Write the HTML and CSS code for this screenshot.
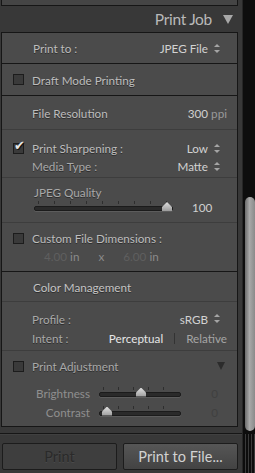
FILE: index.html
```html
<!DOCTYPE html>
<html lang="en">
<head>
  <meta charset="UTF-8">
  <title>Print Job</title>
  <link rel="stylesheet" href="styles.css">
</head>
<body>
  <div class="app">
    <div class="panel">
      <div class="prev"></div>
      <div class="header">
        <span class="title">Print Job</span>
        <span class="tri"></span>
      </div>

      <div class="box">
        <div class="sec s-printto dark">
          <span class="label">Print to :</span>
          <span class="popup">JPEG File <i class="ud"></i></span>
        </div>

        <div class="sec s-draft dark">
          <span class="check"></span>
          <span class="label">Draft Mode Printing</span>
        </div>

        <div class="sec s-res">
          <span class="label">File Resolution</span>
          <span class="value">300 <em>ppi</em></span>
        </div>

        <div class="sec s-sharp">
          <div class="line">
            <span class="check on"></span>
            <span class="label">Print Sharpening :</span>
            <span class="popup">Low <i class="ud"></i></span>
          </div>
          <div class="line">
            <span class="label dim">Media Type :</span>
            <span class="popup">Matte <i class="ud"></i></span>
          </div>
        </div>

        <div class="sec s-jpeg">
          <div class="label">JPEG Quality</div>
          <div class="slider-row">
            <div class="slider wide">
              <div class="ticks"></div>
              <div class="track"></div>
              <div class="knob" style="left: 128px"></div>
            </div>
            <span class="num">100</span>
          </div>
        </div>

        <div class="sec s-custom dark">
          <div class="line">
            <span class="check"></span>
            <span class="label">Custom File Dimensions :</span>
          </div>
          <div class="dims">
            <span class="faded">4.00</span> <span class="unit">in</span>
            <span class="x">x</span>
            <span class="faded">6.00</span> <span class="unit">in</span>
          </div>
        </div>

        <div class="sec s-cm">
          <span class="label">Color Management</span>
        </div>

        <div class="sec s-profile">
          <div class="line">
            <span class="label dim">Profile :</span>
            <span class="popup">sRGB <i class="ud"></i></span>
          </div>
          <div class="line">
            <span class="label dim">Intent :</span>
            <span class="intent">
              <span class="sel">Perceptual</span>
              <span class="bar"></span>
              <span class="opt">Relative</span>
            </span>
          </div>
        </div>

        <div class="sec s-adjust">
          <div class="line">
            <span class="check"></span>
            <span class="label dim">Print Adjustment</span>
            <span class="tri small"></span>
          </div>
          <div class="adj-row">
            <span class="adj-label">Brightness</span>
            <div class="slider">
              <div class="ticks"></div>
              <div class="track"></div>
              <div class="knob" style="left: 37px"></div>
            </div>
            <span class="num off">0</span>
          </div>
          <div class="adj-row">
            <span class="adj-label">Contrast</span>
            <div class="slider">
              <div class="ticks"></div>
              <div class="track"></div>
              <div class="knob" style="left: 3px"></div>
            </div>
            <span class="num off">0</span>
          </div>
        </div>
      </div>

      <div class="sep"></div>

      <div class="buttons">
        <button class="btn disabled">Print</button>
        <button class="btn">Print to File...</button>
      </div>
    </div>

    <div class="scroll">
      <div class="thumb"></div>
      <div class="grip"></div>
    </div>
  </div>
</body>
</html>
```

FILE: styles.css
```css
body {
  margin: 0;
  background: #0d0d0d;
  font-family: Lato, "Open Sans", sans-serif;
  font-size: 11.7px;
  color: #bdbdbd;
}
.app {
  display: flex;
  width: 255px;
  height: 473px;
  overflow: hidden;
}
.panel {
  width: 242px;
  background: #383838;
  border-right: 1px solid #262626;
}
.scroll {
  width: 12px;
  background: #0d0d0d;
  display: flex;
  flex-direction: column;
  align-items: flex-end;
}

/* previous panel bottom */
.prev {
  height: 5px;
  width: 235px;
  margin-left: 1px;
  border: 1px solid #161616;
  border-top: none;
  background: #454545;
}

.header {
  height: 26px;
  display: flex;
  justify-content: flex-end;
  align-items: center;
  padding-right: 9px;
}
.title {
  font-size: 15.5px;
  color: #b9b9b9;
  letter-spacing: -0.3px;
  margin-right: 11px;
}
.tri {
  width: 0;
  height: 0;
  border-left: 5.5px solid transparent;
  border-right: 5.5px solid transparent;
  border-top: 9px solid #a8a8a8;
}
.tri.small {
  border-left-width: 4.5px;
  border-right-width: 4.5px;
  border-top: 8px solid #2c2c2c;
  margin-left: auto;
  margin-right: 2px;
}

.box {
  width: 235px;
  margin-left: 1px;
  border: 1px solid #161616;
  background: #4b4b4b;
}
.sec {
  padding: 0 10px 0 11px;
  border-bottom: 1px solid #3d3d3d;
  box-sizing: border-box;
}
.sec.dark {
  border-bottom-color: #161616;
}
.s-adjust {
  border-bottom: none;
}
.label {
  color: #bdbdbd;
  text-shadow: 0 1px 0 #2e2e2e;
}
.label.dim {
  color: #a9a9a9;
}
.popup {
  margin-left: auto;
  color: #d2d2d2;
  display: flex;
  align-items: center;
}
.ud {
  display: inline-block;
  width: 6px;
  height: 9px;
  margin-left: 6px;
  position: relative;
}
.ud::before,
.ud::after {
  content: "";
  position: absolute;
  left: 0;
  border-left: 3px solid transparent;
  border-right: 3px solid transparent;
}
.ud::before {
  top: 0;
  border-bottom: 3.5px solid #a5a5a5;
}
.ud::after {
  bottom: 0;
  border-top: 3.5px solid #a5a5a5;
}

.s-printto {
  height: 31px;
  display: flex;
  align-items: center;
  padding-left: 31px;
  padding-right: 17px;
}
.s-draft {
  height: 32px;
  display: flex;
  align-items: center;
}
.check {
  width: 9px;
  height: 9px;
  border: 1px solid #1c1c1c;
  background: #3a3a3a;
  margin-right: 8px;
  position: relative;
  flex: none;
}
.check.on::after {
  content: "\2714";
  position: absolute;
  left: 0;
  top: -6px;
  font-family: "DejaVu Sans", sans-serif;
  font-size: 13px;
  color: #e6e6e6;
  text-shadow: 1px 1px 0 #111;
}

.s-res {
  height: 34px;
  display: flex;
  align-items: center;
  padding-left: 30px;
}
.value {
  margin-left: auto;
  color: #d0d0d0;
}
.value em {
  font-style: normal;
  color: #9a9a9a;
}

.s-sharp {
  height: 48px;
  padding-top: 9px;
  padding-right: 17px;
}
.line {
  display: flex;
  align-items: center;
  height: 18px;
}
.s-sharp .line:nth-child(2) .label,
.s-profile .line .label {
  margin-left: 19px;
}

.s-jpeg {
  height: 45px;
  padding-left: 32px;
  padding-top: 8px;
}
.s-jpeg .label {
  display: block;
  color: #a9a9a9;
  line-height: 13px;
}
.slider-row {
  display: flex;
  align-items: center;
  margin-top: 1px;
}
.slider {
  position: relative;
  width: 82px;
  height: 14px;
  flex: none;
}
.slider.wide {
  width: 139px;
}
.ticks {
  position: absolute;
  left: 4px;
  right: 4px;
  top: 1px;
  height: 3px;
  background: repeating-linear-gradient(to right, #2e2e2e 0 1px, transparent 1px 15px);
}
.slider.wide .ticks {
  background: repeating-linear-gradient(to right, #2e2e2e 0 1px, transparent 1px 16px);
}
.track {
  position: absolute;
  left: 0;
  right: 0;
  top: 6px;
  height: 3px;
  border-radius: 2px;
  background: #2a2a2a;
  border: 1px solid #1b1b1b;
  box-shadow: 0 1px 0 #5c5c5c;
}
.knob {
  position: absolute;
  top: 2px;
  width: 10px;
  height: 9px;
  background: linear-gradient(#e0e0e0, #9b9b9b);
  clip-path: polygon(50% 0, 100% 55%, 100% 100%, 0 100%, 0 55%);
}
.num {
  margin-left: 19px;
  color: #d0d0d0;
}
.num.off {
  margin-left: auto;
  margin-right: 9px;
  color: #404040;
}

.s-custom {
  height: 49px;
  padding-top: 6px;
}
.dims {
  display: flex;
  align-items: center;
  height: 18px;
  padding-left: 31px;
  color: #8a8a8a;
  white-space: pre;
}
.faded {
  color: #5f5f5f;
}
.unit {
  margin-left: 3px;
}
.x {
  margin: 0 19px 0 19px;
}

.s-cm {
  height: 30px;
  display: flex;
  align-items: center;
  padding-left: 31px;
}
.s-cm .label {
  color: #c4c4c4;
}

.s-profile {
  height: 49px;
  padding-top: 7px;
  padding-right: 17px;
}
.s-profile .line {
  height: 19px;
}
.intent {
  display: flex;
  align-items: center;
  margin-left: auto;
  margin-right: -7px;
}
.sel {
  color: #e6e6e6;
}
.bar {
  width: 1px;
  height: 11px;
  background: #333;
  margin: 2px 11px 0 11px;
}
.opt {
  color: #a5a5a5;
}

.s-adjust {
  height: 75px;
  padding-top: 6px;
}
.adj-row {
  display: flex;
  align-items: center;
  height: 19px;
}
.adj-row:nth-child(2) {
  margin-top: 8px;
}
.adj-label {
  width: 77px;
  text-align: right;
  margin-right: 9px;
  color: #8f8f8f;
}

.sep {
  margin-top: 6px;
  height: 1px;
  background: #161616;
  border-bottom: 1px solid #404040;
}
.buttons {
  display: flex;
  gap: 6px;
  padding: 8px 0 0 2px;
}
.btn {
  height: 27px;
  width: 115px;
  border: 1px solid #1c1c1c;
  border-radius: 2px;
  font-family: Lato, "Open Sans", sans-serif;
  font-size: 14.5px;
  color: #d2d2d2;
  background: linear-gradient(#565656, #434343);
  padding: 0;
}
.btn.disabled {
  color: #2a2a2a;
  background: #3e3e3e;
  text-shadow: 0 1px 0 #4a4a4a;
}

.thumb {
  margin-top: 197px;
  width: 10px;
  height: 234px;
  border-radius: 5px;
  background: linear-gradient(to right, #6b6b6b, #a8a8a8 45%, #8a8a8a);
}
.grip {
  margin-top: 3px;
  width: 10px;
  flex: 1;
  background: repeating-linear-gradient(to right, #3a3a3a 0 1px, #0d0d0d 1px 3px);
}
```
